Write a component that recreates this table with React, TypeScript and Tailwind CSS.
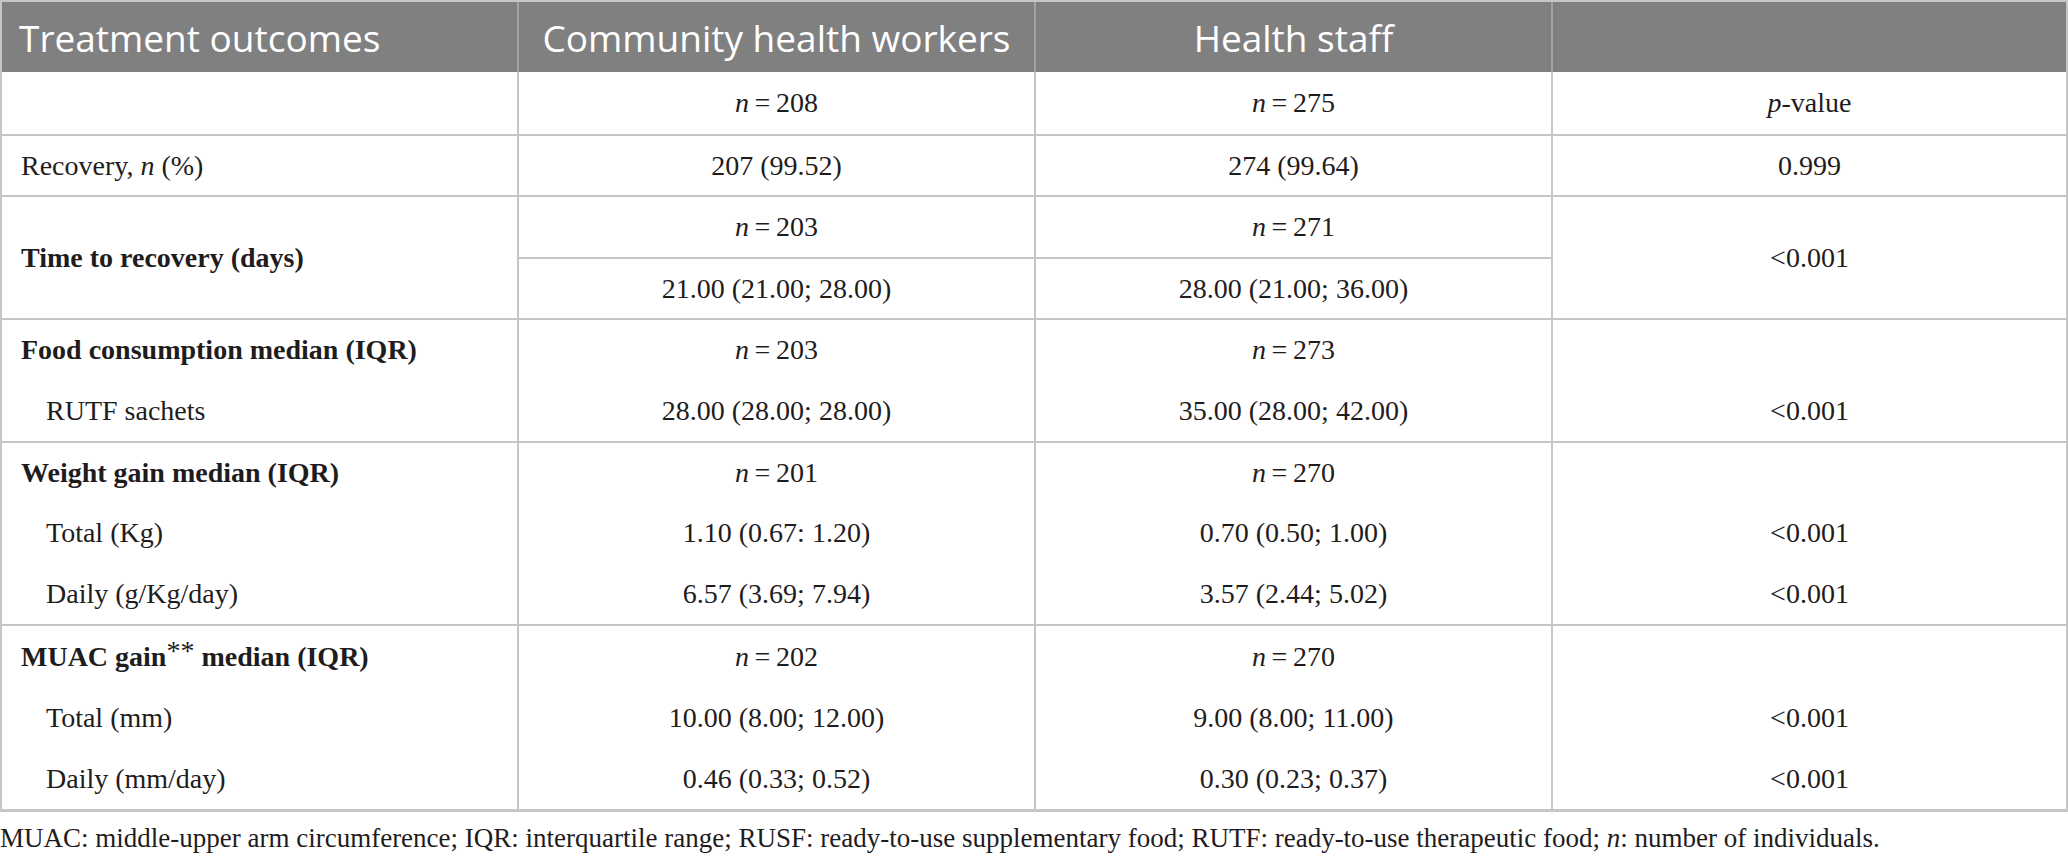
import React from "react";

function Lines({
  items,
  align = "center",
  first = false,
}: {
  items: React.ReactNode[];
  align?: "center" | "left";
  first?: boolean;
}) {
  return (
    <div className={"flex flex-col h-full" + (first ? "" : " border-l-2 border-[#c6c6c6]")}>
      {items.map((it, i) => (
        <div
          key={i}
          className={
            "flex-1 flex items-center" +
            (align === "center" ? " justify-center" : " justify-start pl-[19px]")
          }
        >
          {it}
        </div>
      ))}
    </div>
  );
}

const N = ({ v }: { v: string }) => (
  <span>
    <i>n</i>
    {"\u2009=\u2009"}
    {v}
  </span>
);

const Bold = ({ children }: { children: React.ReactNode }) => (
  <span className="font-bold">{children}</span>
);
const Ind = ({ children }: { children: React.ReactNode }) => (
  <span className="pl-[25px]">{children}</span>
);

function Row({ cols, h }: { cols: React.ReactNode[][]; h: string }) {
  return (
    <div className={"grid grid-cols-[515px_517px_517px_1fr] border-t-2 border-[#c6c6c6] " + h}>
      <Lines items={cols[0]} align="left" first />
      <Lines items={cols[1]} />
      <Lines items={cols[2]} />
      <Lines items={cols[3]} />
    </div>
  );
}

export default function App() {
  return (
    <div className="w-[2068px] h-[862px] bg-white text-[#1f1c1d] font-['Liberation_Serif',serif] text-[28px] leading-none">
      <div className="border-2 border-b-[3px] border-[#c6c6c6]">
        {/* Header */}
        <div className="grid grid-cols-[515px_517px_517px_1fr] h-[70px] bg-[#808080] text-white font-['Open_Sans',sans-serif] text-[37px]">
          <div className="flex items-center pl-[17px]">Treatment outcomes</div>
          <div className="flex items-center justify-center border-l-2 border-[#a3a3a3]">
            Community health workers
          </div>
          <div className="flex items-center justify-center border-l-2 border-[#a3a3a3]">
            Health staff
          </div>
          <div className="border-l-2 border-[#a3a3a3]"></div>
        </div>

        {/* n row */}
        <div className="grid grid-cols-[515px_517px_517px_1fr] h-[62px]">
          <Lines items={[""]} align="left" first />
          <Lines items={[<N v="208" />]} />
          <Lines items={[<N v="275" />]} />
          <Lines
            items={[
              <span>
                <i>p</i>-value
              </span>,
            ]}
          />
        </div>

        <Row
          h="h-[61px]"
          cols={[
            [
              <span>
                Recovery, <i>n</i> (%)
              </span>,
            ],
            ["207 (99.52)"],
            ["274 (99.64)"],
            ["0.999"],
          ]}
        />

        {/* Time to recovery */}
        <div className="grid grid-cols-[515px_517px_517px_1fr] h-[123px] border-t-2 border-[#c6c6c6]">
          <div className="flex items-center pl-[19px]">
            <Bold>Time to recovery (days)</Bold>
          </div>
          <div className="flex flex-col border-l-2 border-[#c6c6c6]">
            <div className="h-[60px] flex items-center justify-center">
              <N v="203" />
            </div>
            <div className="flex-1 flex items-center justify-center border-t-2 border-[#c6c6c6]">
              21.00 (21.00; 28.00)
            </div>
          </div>
          <div className="flex flex-col border-l-2 border-[#c6c6c6]">
            <div className="h-[60px] flex items-center justify-center">
              <N v="271" />
            </div>
            <div className="flex-1 flex items-center justify-center border-t-2 border-[#c6c6c6]">
              28.00 (21.00; 36.00)
            </div>
          </div>
          <div className="flex items-center justify-center border-l-2 border-[#c6c6c6]">
            &lt;0.001
          </div>
        </div>

        <Row
          h="h-[123px]"
          cols={[
            [<Bold>Food consumption median (IQR)</Bold>, <Ind>RUTF sachets</Ind>],
            [<N v="203" />, "28.00 (28.00; 28.00)"],
            [<N v="273" />, "35.00 (28.00; 42.00)"],
            ["", "<0.001"],
          ]}
        />

        <Row
          h="h-[183px]"
          cols={[
            [
              <Bold>Weight gain median (IQR)</Bold>,
              <Ind>Total (Kg)</Ind>,
              <Ind>Daily (g/Kg/day)</Ind>,
            ],
            [<N v="201" />, "1.10 (0.67: 1.20)", "6.57 (3.69; 7.94)"],
            [<N v="270" />, "0.70 (0.50; 1.00)", "3.57 (2.44; 5.02)"],
            ["", "<0.001", "<0.001"],
          ]}
        />

        <Row
          h="h-[185px]"
          cols={[
            [
              <span>
                <Bold>MUAC gain</Bold>
                <span className="relative -top-[6px]">**</span>
                <Bold> median (IQR)</Bold>
              </span>,
              <Ind>Total (mm)</Ind>,
              <Ind>Daily (mm/day)</Ind>,
            ],
            [<N v="202" />, "10.00 (8.00; 12.00)", "0.46 (0.33; 0.52)"],
            [<N v="270" />, "9.00 (8.00; 11.00)", "0.30 (0.23; 0.37)"],
            ["", "<0.001", "<0.001"],
          ]}
        />
      </div>

      <p className="mt-[11px] leading-[30px] text-[27px]">
        MUAC: middle-upper arm circumference; IQR: interquartile range; RUSF: ready-to-use
        supplementary food; RUTF: ready-to-use therapeutic food; <i>n</i>: number of
        individuals.
      </p>
    </div>
  );
}
